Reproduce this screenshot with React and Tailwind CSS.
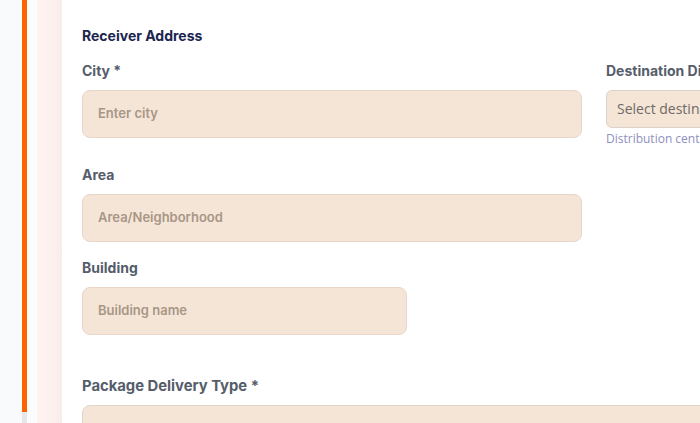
export default function App() {
  return (
    <div className="flex h-[423px] w-[700px] overflow-hidden bg-[#f8fafc] font-['Inter',sans-serif]">
      <div className="w-[22px] shrink-0 bg-[#f8fafc]" />
      <div className="flex w-[5px] shrink-0 flex-col">
        <div className="h-[412px] bg-[#ff6200]" />
        <div className="flex-1 bg-[#e5e7eb]" />
      </div>
      <div className="w-[10px] shrink-0 bg-[#fbfcfe]" />
      <div className="w-[25px] shrink-0 bg-gradient-to-r from-[#fdf3f1] via-[#fdf1ef] to-[#f6eeec]" />
      <div className="w-[900px] shrink-0 bg-white px-5 pt-[27px]">
        <h3 className="text-[14px] font-bold leading-[18px] text-[#1b2550]">Receiver Address</h3>
        <div className="mt-[17px] grid grid-cols-[500px_500px] gap-x-[24px]">
          <div>
            <label className="block text-[14px] font-bold leading-[18px] text-[#555d6b]">City *</label>
            <div className="mt-[10px] flex h-[48px] items-center rounded-lg border border-[#e9d6c8] bg-[#f5e5d7] px-[15px] text-[13px] font-semibold text-[#a89686]">
              Enter city
            </div>
            <label className="mt-[28px] block text-[14px] font-bold leading-[18px] text-[#555d6b]">Area</label>
            <div className="mt-[10px] flex h-[48px] items-center rounded-lg border border-[#e9d6c8] bg-[#f5e5d7] px-[15px] text-[13px] font-semibold text-[#a89686]">
              Area/Neighborhood
            </div>
            <label className="mt-[17px] block text-[14px] font-bold leading-[18px] text-[#555d6b]">Building</label>
            <div className="mt-[10px] flex h-[48px] w-[325px] items-center rounded-lg border border-[#e9d6c8] bg-[#f5e5d7] px-[15px] text-[13px] font-semibold text-[#a89686]">
              Building name
            </div>
          </div>
          <div>
            <label className="block whitespace-nowrap text-[14px] font-bold leading-[18px] text-[#555d6b]">Destination Distribution Center *</label>
            <div className="mt-[10px] flex h-[38px] items-center rounded-md border border-[#dcd2c9] bg-[#f5e5d7] px-[10px] font-['Open_Sans',sans-serif] text-[14px] leading-[18px] text-[#6e6a66]">
              Select destination distribution center
            </div>
            <p className="mt-[3px] whitespace-nowrap font-['Open_Sans',sans-serif] text-[12px] leading-[16px] text-[#8e8fbd]">
              Distribution center where the package will be delivered
            </p>
          </div>
        </div>
        <label className="mt-[42px] block text-[14.8px] font-bold leading-[18px] text-[#555d6b]">Package Delivery Type *</label>
        <div className="mt-[10px] h-[48px] w-[700px] rounded-lg border border-[#e2d4c8] bg-[#f5e5d7]" />
      </div>
    </div>
  );
}
